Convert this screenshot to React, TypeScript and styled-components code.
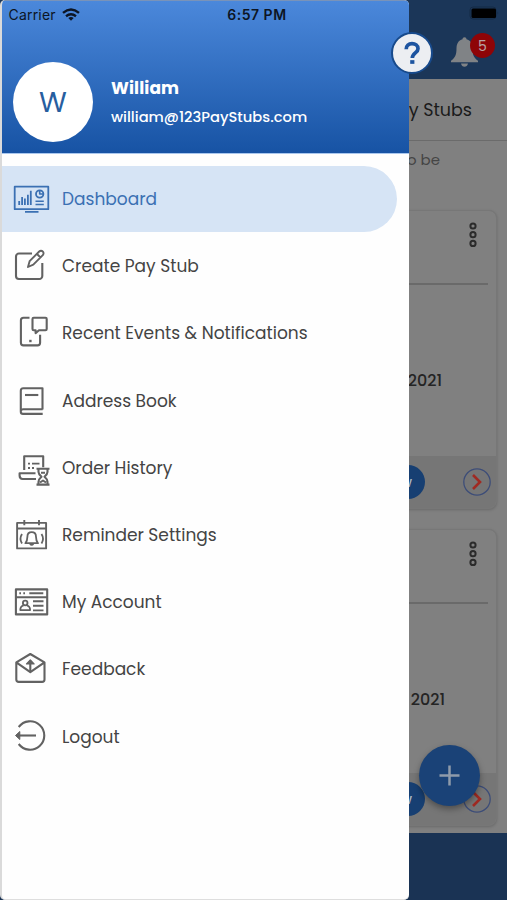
import React from 'react';
import styled, { createGlobalStyle } from 'styled-components';

const GlobalStyle = createGlobalStyle`
  * { box-sizing: border-box; }
  body { margin: 0; background: #808080; font-family: Poppins, Inter, sans-serif; }
`;

const Screen = styled.div`
  position: relative;
  width: 507px;
  height: 900px;
  overflow: hidden;
  background: #808080;
`;

/* ---------- dimmed page ---------- */
const Page = styled.div`
  display: flex;
  flex-direction: column;
  height: 100%;
  > * { flex: none; }
`;
const AppBar = styled.header`
  display: flex;
  flex-direction: column;
  align-items: flex-end;
  height: 79px;
  background: #1b3658;
  padding: 6px 8px 0 0;
`;
const BellBox = styled.div`
  position: relative;
  width: 36px;
  height: 36px;
  margin: 15px 13px 0 0;
`;
const Count = styled.span`
  position: absolute;
  left: 20px;
  top: -2px;
  width: 25px;
  height: 25px;
  border-radius: 50%;
  background: #8e0407;
  color: #b9a5a5;
  font-size: 14px;
  line-height: 26px;
  text-align: center;
`;
const PageTitle = styled.div`
  display: flex;
  align-items: center;
  justify-content: flex-end;
  height: 62px;
  padding-right: 35px;
  border-bottom: 1px solid #6b6b6b;
  color: #1a1a1a;
  font-size: 17.5px;
`;
const Hint = styled.div`
  height: 69px;
  padding: 10px 67px 0 0;
  text-align: right;
  color: #454545;
  font-size: 15px;
  line-height: 18px;
`;
const Card = styled.article<{ $height: number; $after: number }>`
  display: flex;
  flex-direction: column;
  width: 487px;
  height: ${(p) => p.$height}px;
  margin: 0 0 ${(p) => p.$after}px 10px;
  border: 1px solid #777;
  border-radius: 8px;
  background: #808080;
  box-shadow: 0 1px 3px rgba(0, 0, 0, 0.18);
  overflow: hidden;
`;
const CardTop = styled.div`
  display: flex;
  flex: none;
  justify-content: flex-end;
  height: 74px;
  margin-right: 8px;
  padding: 10px 11.5px 0 0;
  border-bottom: 2px solid #6a6a6a;
`;
const CardDate = styled.div<{ $inset: number }>`
  flex: 1;
  padding: 86px ${(p) => p.$inset}px 0 0;
  text-align: right;
  color: #242424;
  font-size: 16px;
  font-weight: 500;
  line-height: 20px;
`;
const CardFooter = styled.footer`
  display: flex;
  flex: none;
  align-items: center;
  justify-content: flex-end;
  gap: 38px;
  height: 52px;
  padding-right: 5px;
  background: #767676;
`;
const ViewButton = styled.button`
  width: 82px;
  height: 34px;
  padding: 0 13px 0 0;
  border: 0;
  border-radius: 17px;
  background: #173f72;
  color: #aeb7c1;
  font: 500 14px Poppins, Inter, sans-serif;
  text-align: right;
`;
const TabBar = styled.nav`
  height: 67px;
  margin-top: auto;
  background: #1a3354;
`;

/* ---------- floating controls ---------- */
const AddButton = styled.button`
  position: absolute;
  left: 419px;
  top: 745px;
  width: 61px;
  height: 61px;
  padding: 0;
  border: 0;
  border-radius: 50%;
  background: #1a4277;
  box-shadow: 0 3px 6px rgba(0, 0, 0, 0.35);
  z-index: 2;
`;
const HelpButton = styled.button`
  position: absolute;
  left: 391px;
  top: 32px;
  width: 42px;
  height: 42px;
  padding: 0;
  border: 2px solid #174a8c;
  border-radius: 50%;
  background: #eceef2;
  z-index: 4;
`;

/* ---------- drawer ---------- */
const Drawer = styled.aside`
  position: absolute;
  left: 0;
  top: 0;
  width: 409px;
  height: 900px;
  border-left: 2px solid #dadada;
  border-bottom: 1px solid #dedede;
  border-radius: 5px;
  background: #fefefe;
  overflow: hidden;
  z-index: 3;
`;
const DrawerHead = styled.header`
  height: 154px;
  margin-left: -2px;
  border-left: 2px solid #6686b2;
  border-top: 1px solid #7993b9;
  border-bottom: 1px solid #a9c7ee;
  background: linear-gradient(#4b88db, #1753a4);
`;
const StatusBar = styled.div`
  display: flex;
  align-items: center;
  height: 26px;
  padding-left: 6.5px;
  color: #0c1524;
  font: 400 14px Inter, sans-serif;
  letter-spacing: 0.2px;
`;
const WifiIcon = styled.svg`
  width: 18px;
  height: 13px;
  margin-left: 6px;
`;
const Clock = styled.span`
  margin-left: 147.5px;
  font-weight: 600;
  letter-spacing: 0.5px;
`;
const Profile = styled.div`
  display: flex;
  align-items: center;
  gap: 18px;
  margin: 35px 0 0 11px;
`;
const Avatar = styled.div`
  width: 80px;
  height: 80px;
  border-radius: 50%;
  background: #fff;
  color: #275e9f;
  font-size: 28.5px;
  line-height: 80px;
  text-align: center;
`;
const Name = styled.div`
  color: #fff;
  font-size: 17px;
  font-weight: 700;
  line-height: 28px;
  letter-spacing: 0.1px;
`;
const Email = styled.div`
  padding-top: 1px;
  color: #fff;
  font-size: 14.7px;
  font-weight: 500;
  line-height: 28px;
`;
const Menu = styled.nav`
  display: flex;
  flex-direction: column;
  gap: 1px;
  margin-left: -2px;
  padding-top: 12px;
`;
const Item = styled.a<{ $active?: boolean }>`
  display: flex;
  align-items: center;
  gap: 13px;
  width: 397px;
  height: 66.2px;
  padding-left: 13px;
  border-radius: 0 33px 33px 0;
  background: ${(p) => (p.$active ? '#d6e4f5' : 'transparent')};
  color: ${(p) => (p.$active ? '#3b70b3' : '#444')};
  font-size: 17px;
  white-space: nowrap;
`;
const Glyph = styled.svg<{ $active?: boolean }>`
  flex: none;
  width: 36px;
  height: 36px;
  overflow: visible;
  fill: none;
  stroke: ${(p) => (p.$active ? '#3b70b3' : '#626262')};
  stroke-width: 2.1;
  stroke-linejoin: round;
`;

const items = [
  {
    label: 'Dashboard', active: true,
    art: (
      <>
        <path d="M1.700 5.700h33.600v22.500H1.700zM12 30.900h13.500" strokeWidth="1.800" />
        <path d="M6.200 20v4M9.100 16v8M11.900 17.500v6.500M14.900 13.700V24M17.800 9.700V24" strokeWidth="1.800" />
        <circle cx="26.700" cy="13" r="3.700" strokeWidth="1.800" />
        <path d="M26.700 9v4h4M22.500 20.200h8.300M22.500 23.500h8.300" strokeWidth="1.600" />
      </>
    ),
  },
  {
    label: 'Create Pay Stub',
    art: (
      <>
        <path d="M19 5.500H6a3 3 0 0 0-3 3V28a3 3 0 0 0 3 3h20.300a3 3 0 0 0 3-3V15" />
        <path d="M15 19l1.600-5.800L26.200 3.500a2.500 2.500 0 0 1 3.600 0 2.500 2.500 0 0 1 0 3.600L20.300 16.700zM24 6l3.500 3.500" strokeWidth="1.900" />
      </>
    ),
  },
  {
    label: 'Recent Events & Notifications',
    art: (
      <>
        <path d="M16.500 2.700h-6a2.600 2.600 0 0 0-2.600 2.600v22.500a2.600 2.600 0 0 0 2.600 2.600h14a2.600 2.600 0 0 0 2.600-2.600v-8" />
        <path d="M20.700 2.700h11.800q1.200 0 1.200 1.200v10.200q0 1.200-1.200 1.200H26l-3.400 2.800v-2.800h-1.900q-1.200 0-1.200-1.200V3.900q0-1.200 1.200-1.200z" />
        <path d="M16.200 26h2.400" strokeWidth="2.400" />
      </>
    ),
  },
  {
    label: 'Address Book',
    art: (
      <>
        <path d="M29.500 26.500V5.200H10.300a2.500 2.500 0 0 0-2.500 2.500v21q0 2.200 2.200 2.200h19.700M7.800 28.300q0-2 2.500-2h19.400" />
        <path d="M12 12h13.300" />
      </>
    ),
  },
  {
    label: 'Order History',
    art: (
      <>
        <path d="M11.200 20V6.200h19v11M22.500 23.300H6.600v2.300q0 3.400 3 3.400H23" />
        <path d="M15 13.600h2M19 13.600h7.500M15 18h2M19 18h2" strokeWidth="1.800" />
        <path d="M23.500 18.700h13M23.500 34.600h13M25.500 19v3q0 2 3 4.700-3 2.600-3 5v2.500M34.500 19v3q0 2-3 4.700 3 2.600 3 5v2.500M28 22.800h4M27 32.500l3-2 3 2" />
      </>
    ),
  },
  {
    label: 'Reminder Settings',
    art: (
      <>
        <path d="M4.100 5.900h29v25.500h-29zM4.100 11.500h29M11.300 3v5.300M26 3v5.300" strokeWidth="1.900" />
        <path d="M18.700 15.200c-3.200 0-4.300 2.300-4.300 4.500 0 3-.5 4.500-2 6.500H25c-1.500-2-2-3.500-2-6.500 0-2.200-1.100-4.500-4.300-4.500zM17 26.700q1.700 2.500 3.400 0M9 17q-3 4.700 0 9.500M28.500 17q3 4.700 0 9.500" strokeWidth="1.800" />
      </>
    ),
  },
  {
    label: 'My Account',
    art: (
      <>
        <path d="M2.900 5.400h31.300v25H2.900zM2.900 13.300h31.300" />
        <path d="M6.300 9.300H8M10.300 9.300H12M16.300 9.300h14M20 17.300h10.500M20 21.800h10.500M20 26.400h10.500" strokeWidth="1.900" />
        <circle cx="12.200" cy="19" r="2.300" strokeWidth="1.800" />
        <path d="M10.500 21.700q-3.200.5-3.200 4.400h9.800q0-3.900-3.200-4.400" strokeWidth="1.800" />
      </>
    ),
  },
  {
    label: 'Feedback',
    art: (
      <>
        <path d="M3.300 11.300L17.300 3l14.200 8.300v17.200q0 2.400-2.400 2.400H5.700q-2.400 0-2.400-2.400zM3.300 11.300l14 9.800 14.200-9.800" />
        <path d="M17.300 21V9.500" />
        <path d="M13.500 13l3.800-4 3.800 4z" fill="#626262" strokeWidth="1.200" />
      </>
    ),
  },
  {
    label: 'Logout',
    art: (
      <>
        <path d="M5.700 8A14.200 14.200 0 1 1 5.700 25" />
        <path d="M4 16.500h19" />
        <path d="M6.800 12.500l-4.300 4 4.300 4z" fill="#626262" strokeWidth="1" />
      </>
    ),
  },
];

const MoreIcon = () => (
  <svg width="8" height="28" viewBox="0 0 8 28" fill="none" stroke="#2b2b2b" strokeWidth="2">
    <circle cx="4" cy="5" r="2.600" />
    <circle cx="4" cy="13.700" r="2.600" />
    <circle cx="4" cy="22.400" r="2.600" />
  </svg>
);

const NextIcon = () => (
  <svg width="28" height="28" viewBox="0 0 28 28" fill="none">
    <circle cx="14" cy="14" r="13.200" stroke="#3d4d78" strokeWidth="1.300" />
    <path d="M10 7l7 7-7 7" stroke="#a02a22" strokeWidth="2.600" />
  </svg>
);

function StubCard({ height, inset, after }: { height: number; inset: number; after: number }) {
  return (
    <Card $height={height} $after={after}>
      <CardTop><MoreIcon /></CardTop>
      <CardDate $inset={inset}>2021</CardDate>
      <CardFooter>
        <ViewButton>View</ViewButton>
        <NextIcon />
      </CardFooter>
    </Card>
  );
}

export default function App() {
  return (
    <Screen>
      <GlobalStyle />
      <Page>
        <AppBar>
          <svg width="30" height="14" viewBox="0 0 30 14">
            <rect x="1" y="1" width="26" height="12" rx="3" fill="none" stroke="#152a44" />
            <rect x="2.500" y="2.500" width="24.500" height="9.500" rx="1.500" fill="#000" />
            <path d="M28.500 5.500q1.500 1.500 0 3" fill="#152a44" />
          </svg>
          <BellBox>
            <svg width="30" height="34" viewBox="0 0 30 34" fill="#808386">
              <path d="M14.500 2.300c1.200 0 2 .8 2 2 4 1 6 4.500 6 9 0 7 1.500 9.500 5.500 12.500v1.500H1v-1.500c4-3 5.500-5.500 5.500-12.500 0-4.500 2-8 6-9 0-1.200.8-2 2-2zM11 28.500h7q-.8 3.200-3.500 3.200T11 28.500z" />
            </svg>
            <Count>5</Count>
          </BellBox>
        </AppBar>
        <PageTitle>My Pay Stubs</PageTitle>
        <Hint>to be</Hint>
        <StubCard height={299} inset={54} after={20} />
        <StubCard height={297} inset={51} after={7} />
        <TabBar />
      </Page>

      <AddButton aria-label="Add">
        <svg width="61" height="61" viewBox="0 0 61 61" stroke="#8f9baa" strokeWidth="2.500">
          <path d="M20.500 30.500h20M30.500 20.500v20" />
        </svg>
      </AddButton>

      <Drawer>
        <DrawerHead>
          <StatusBar>
            Carrier
            <WifiIcon viewBox="0 0 18 13" fill="none" stroke="#0c1524" strokeWidth="2.400">
              <path d="M1 4.800Q9-2 17 4.800M4 8.200q5-4 10 0" />
              <path d="M6.300 10q2.700-2 5.400 0L9 12.800z" fill="#0c1524" stroke="none" />
            </WifiIcon>
            <Clock>6:57 PM</Clock>
          </StatusBar>
          <Profile>
            <Avatar>W</Avatar>
            <div>
              <Name>William</Name>
              <Email>william@123PayStubs.com</Email>
            </div>
          </Profile>
        </DrawerHead>
        <Menu>
          {items.map((item) => (
            <Item key={item.label} $active={item.active}>
              <Glyph viewBox="0 0 36 36" $active={item.active}>{item.art}</Glyph>
              {item.label}
            </Item>
          ))}
        </Menu>
      </Drawer>

      <HelpButton aria-label="Help">
        <svg width="38" height="38" viewBox="0 0 38 38" fill="none" stroke="#1d54a0" strokeWidth="3.700">
          <path d="M13.200 15.200c0-3.600 2.500-5.500 5.800-5.500s6 1.900 6 5c0 4.200-5.700 4.400-5.700 9.300" />
          <path d="M17.200 28h4.200" />
        </svg>
      </HelpButton>
    </Screen>
  );
}
